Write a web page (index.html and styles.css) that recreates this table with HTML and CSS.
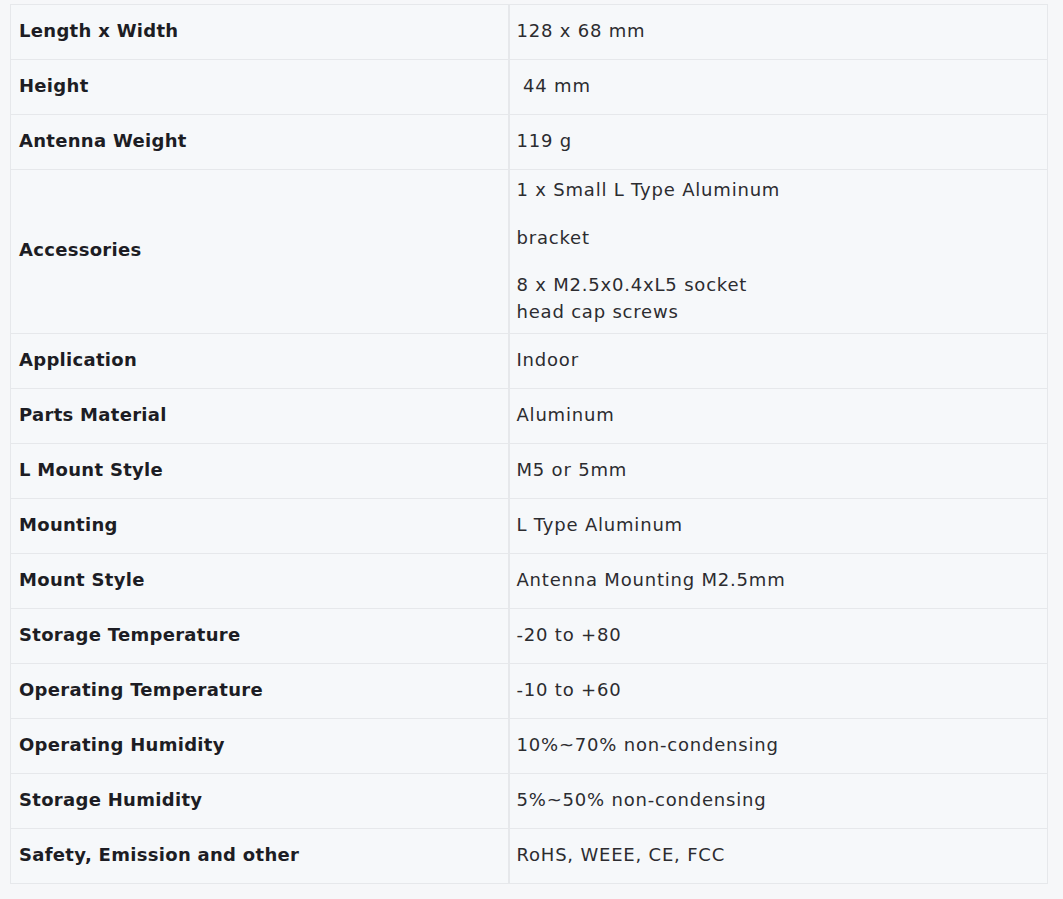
FILE: index.html
```html
<!DOCTYPE html>
<html>
<head>
<meta charset="utf-8">
<link rel="stylesheet" href="styles.css">
</head>
<body>
<table class="spec">
<tbody>
<tr><th>Length x Width</th><td>128 x 68 mm</td></tr>
<tr><th>Height</th><td>&nbsp;44 mm</td></tr>
<tr><th>Antenna Weight</th><td>119 g</td></tr>
<tr><th>Accessories</th><td class="multi"><p class="first">1 x Small L Type Aluminum</p><p>bracket</p><p>8 x M2.5x0.4xL5 socket<br>head cap screws</p></td></tr>
<tr><th>Application</th><td>Indoor</td></tr>
<tr><th>Parts Material</th><td>Aluminum</td></tr>
<tr><th>L Mount Style</th><td>M5 or 5mm</td></tr>
<tr><th>Mounting</th><td>L Type Aluminum</td></tr>
<tr><th>Mount Style</th><td>Antenna Mounting M2.5mm</td></tr>
<tr><th>Storage Temperature</th><td>-20 to +80</td></tr>
<tr><th>Operating Temperature</th><td>-10 to +60</td></tr>
<tr><th>Operating Humidity</th><td>10%~70% non-condensing</td></tr>
<tr><th>Storage Humidity</th><td>5%~50% non-condensing</td></tr>
<tr><th>Safety, Emission and other</th><td>RoHS, WEEE, CE, FCC</td></tr>
</tbody>
</table>
</body>
</html>
```
FILE: styles.css
```css
html, body {
  margin: 0;
  padding: 0;
  background: #f6f7f9;
}
body {
  padding: 4px 0 0 10px;
  font-family: "DejaVu Sans", Verdana, sans-serif;
  font-size: 18px;
}
.spec {
  border-collapse: collapse;
  width: 1038px;
  background: #f6f8fa;
  border: 1px solid #e3e5e8;
}
.spec th, .spec td {
  border: 1px solid #e6e8eb;
  height: 55px;
  box-sizing: border-box;
  padding: 4px 8px 8px 8px;
  vertical-align: middle;
  text-align: left;
  line-height: 27px;
}
.spec th {
  width: 498px;
  font-weight: bold;
  color: #1d1d24;
  letter-spacing: 0.3px;
}
.spec td {
  color: #2c2c30;
  border-left: 2px solid #e6e8eb;
  letter-spacing: 0.8px;
  padding-left: 7px;
}
.spec td.multi {
  padding: 6px 8px 8px 7px;
}
.spec td.multi p {
  margin: 0 0 20px 0;
}
.spec td.multi p.first {
  margin-bottom: 21px;
}
.spec td.multi p:last-child {
  margin-bottom: 0;
}
```
